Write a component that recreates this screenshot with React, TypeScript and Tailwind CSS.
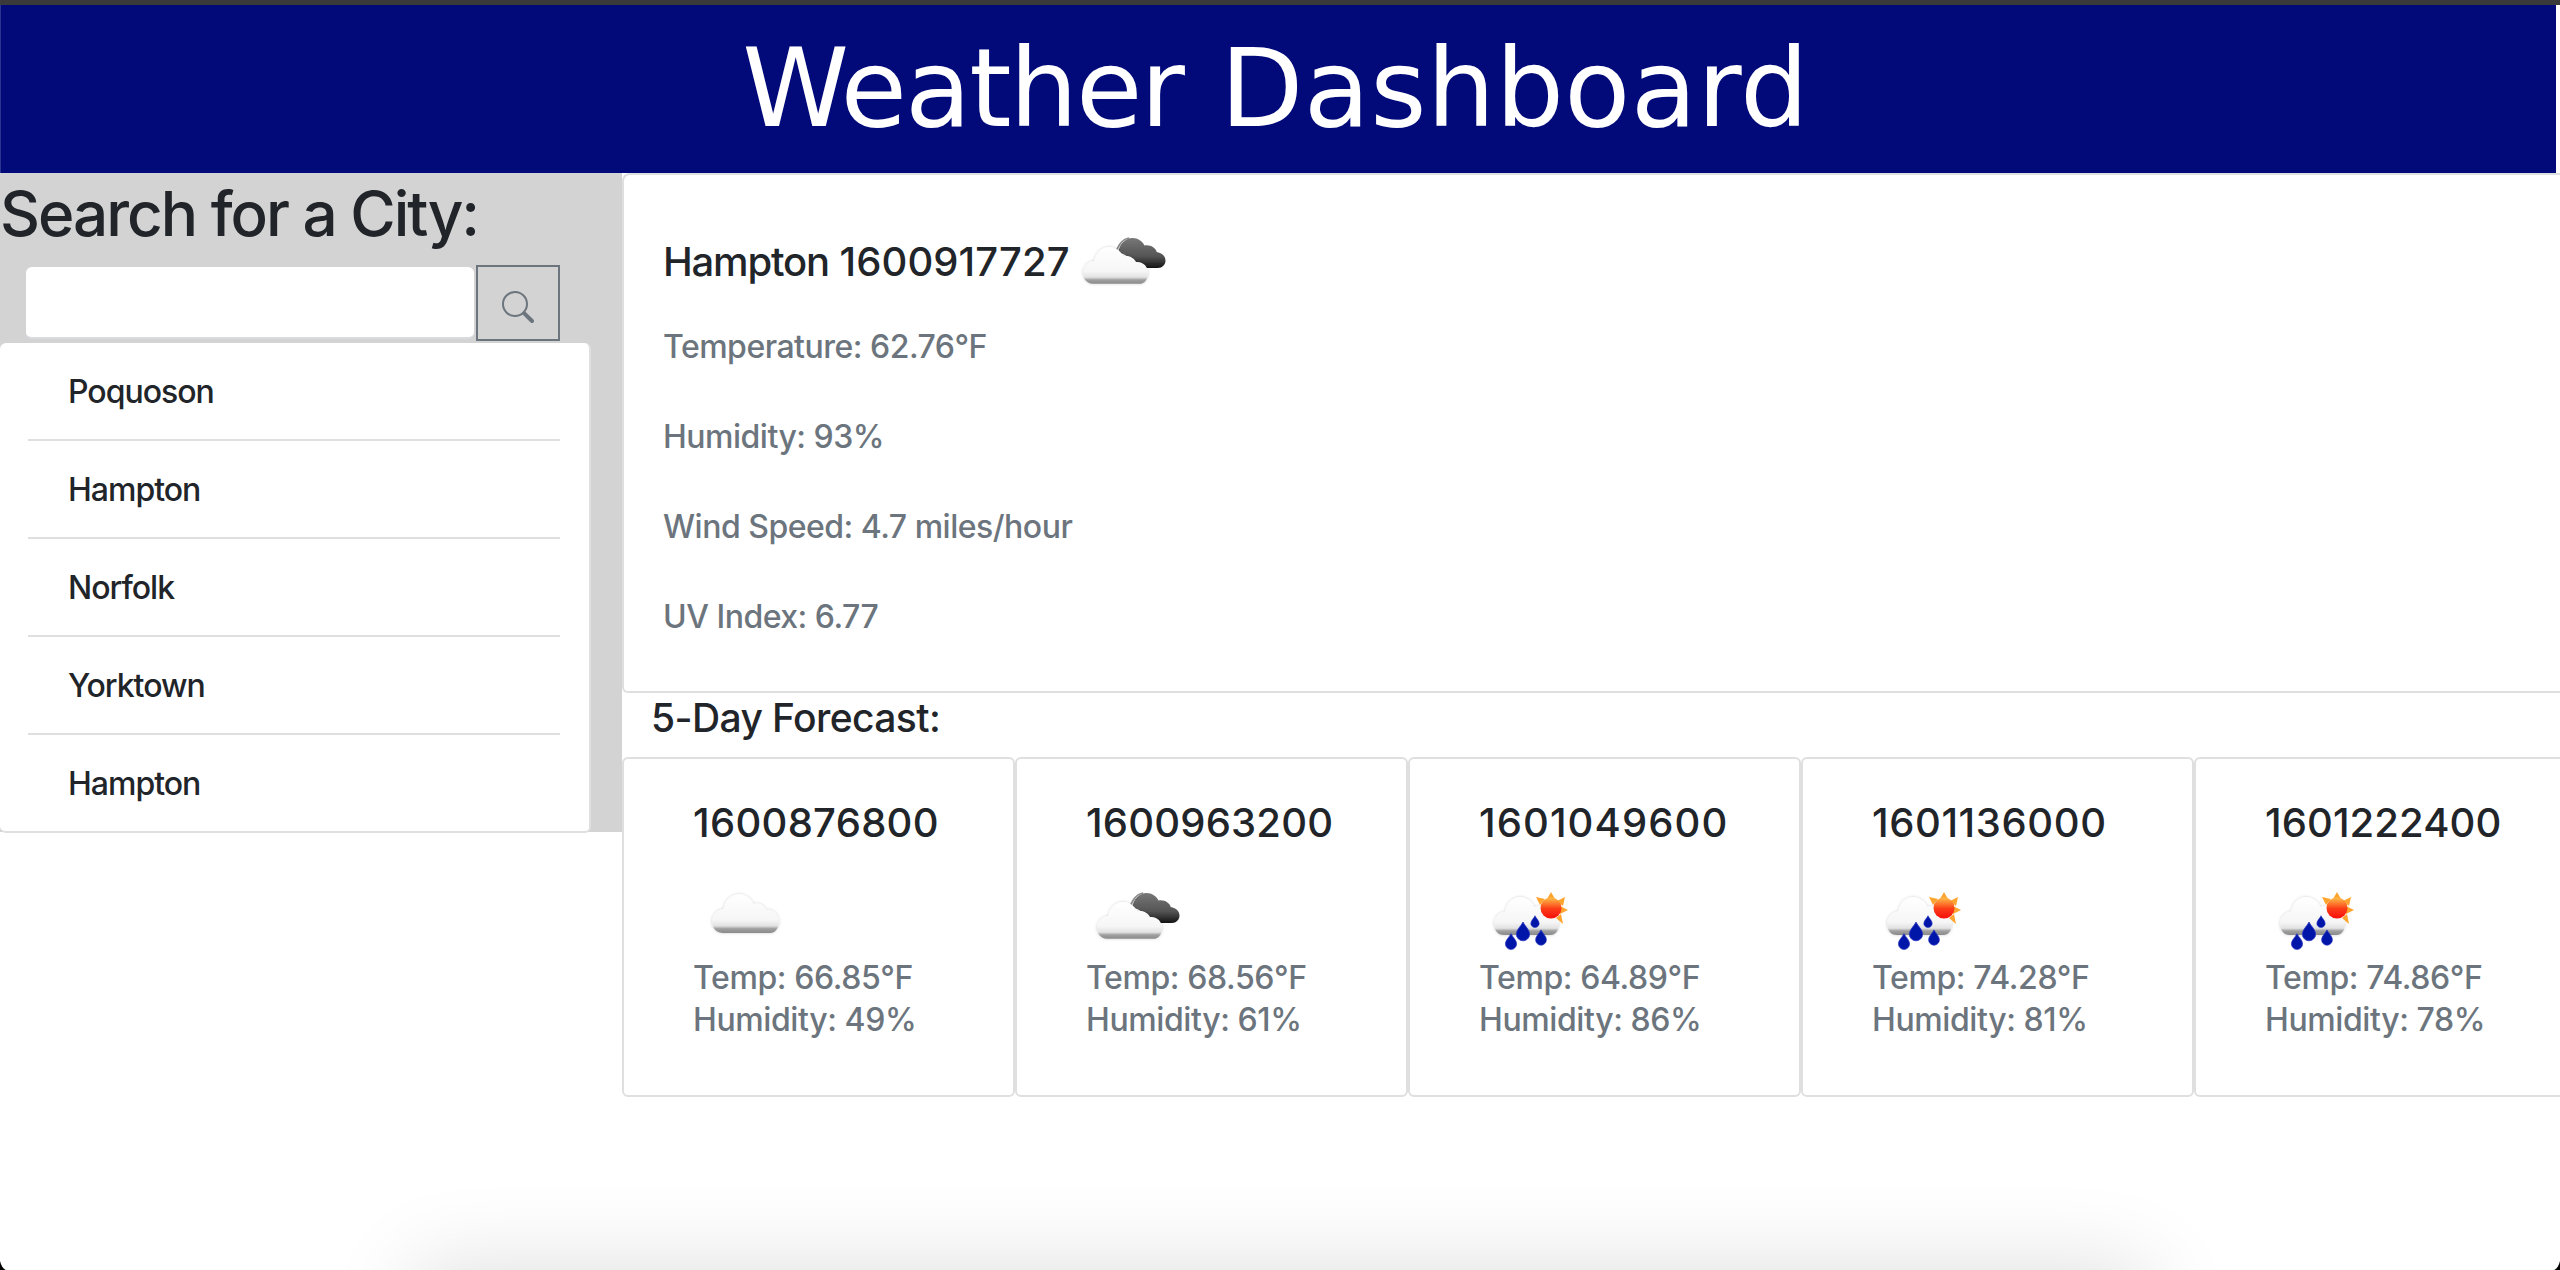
const cities = ["Poquoson", "Hampton", "Norfolk", "Yorktown", "Hampton"];

type IconKind = "cloud" | "broken" | "rain";

const forecast: { date: string; spacing: string; icon: IconKind; temp: string; humidity: string }[] = [
  { date: "1600876800", spacing: "tracking-[0.3px]", icon: "cloud", temp: "66.85", humidity: "49" },
  { date: "1600963200", spacing: "tracking-[0.2px]", icon: "broken", temp: "68.56", humidity: "61" },
  { date: "1601049600", spacing: "tracking-[1.1px]", icon: "rain", temp: "64.89", humidity: "86" },
  { date: "1601136000", spacing: "tracking-[0.6px]", icon: "rain", temp: "74.28", humidity: "81" },
  { date: "1601222400", spacing: "tracking-[0.1px]", icon: "rain", temp: "74.86", humidity: "78" },
];

const cloudPath =
  "M8 62c-5-8 0-19 11-20 2-11 12-17 21-15 6 1 11 5 13 10 6-2 12 1 15 6 8-1 14 5 14 12 0 7-4 12-10 12H18c-5 0-8-2-10-5z";

function Gradients() {
  return (
    <svg width="0" height="0" className="absolute">
      <defs>
        <linearGradient id="cloudFill" x1="0" y1="0" x2="0" y2="1">
          <stop offset="0" stopColor="#ffffff" />
          <stop offset="0.66" stopColor="#f6f6f6" />
          <stop offset="0.82" stopColor="#e2e2e2" />
          <stop offset="0.89" stopColor="#a0a0a0" />
          <stop offset="1" stopColor="#8a8a8a" />
        </linearGradient>
        <linearGradient id="darkFill" x1="0" y1="0" x2="0" y2="1">
          <stop offset="0" stopColor="#777777" />
          <stop offset="0.6" stopColor="#555555" />
          <stop offset="1" stopColor="#141414" />
        </linearGradient>
        <linearGradient id="sunFill" x1="0" y1="0" x2="0" y2="1">
          <stop offset="0" stopColor="#ffc04a" />
          <stop offset="0.55" stopColor="#fb3a14" />
          <stop offset="1" stopColor="#f80f0f" />
        </linearGradient>
        <filter id="soft" x="-20%" y="-20%" width="140%" height="140%">
          <feGaussianBlur stdDeviation="0.7" />
        </filter>
        <filter id="cloudHalo" x="-20%" y="-20%" width="140%" height="140%">
          <feDropShadow dx="0" dy="0" stdDeviation="1.6" floodColor="#000000" floodOpacity="0.2" />
          <feGaussianBlur stdDeviation="0.5" />
        </filter>
      </defs>
    </svg>
  );
}

function Drop({ x, y, s }: { x: number; y: number; s: number }) {
  return (
    <path
      transform={`translate(${x} ${y}) scale(${s})`}
      d="M0-9C2-5 6-2 6 2a6 6 0 0 1-12 0C-6-2-2-5 0-9z"
      fill="#0613a8"
      stroke="#2a3bc4"
      strokeWidth="0.8"
    />
  );
}

function WeatherIcon({ kind }: { kind: IconKind }) {
  if (kind === "cloud") {
    return (
      <svg viewBox="0 0 100 100" className="h-[100px] w-[100px] shrink-0 overflow-visible">
        <g filter="url(#cloudHalo)" transform="translate(14.7 6.6) scale(0.88 0.96)">
          <path d={cloudPath} fill="url(#cloudFill)" />
        </g>
      </svg>
    );
  }
  if (kind === "broken") {
    return (
      <svg viewBox="0 0 100 100" className="h-[100px] w-[100px] shrink-0 overflow-visible">
        <g filter="url(#soft)" transform="translate(-10 12.8) scale(1.1 1.07)">
          <path
            d="M52 31c1-9 7-14 13-14 5 0 9 3 11 7 5-1 10 2 11 6 5 1 8 4 8 8s-3 7-7 7H70c-5-1-8-5-9-10-3-3-6-4-9-4z"
            fill="url(#darkFill)"
          />
          <path d="M50 32c1-8 6-14 12-15" fill="none" stroke="#8a8a8a" strokeWidth="1.6" />
        </g>
        <g filter="url(#cloudHalo)" transform="translate(6.9 15.9) scale(0.855 0.91)">
          <path d={cloudPath} fill="url(#cloudFill)" />
        </g>
      </svg>
    );
  }
  return (
    <svg viewBox="0 0 100 100" className="h-[100px] w-[100px] shrink-0 overflow-visible">
      <g filter="url(#cloudHalo)" transform="translate(10.9 10.1) scale(0.855 0.94)">
        <path d={cloudPath} fill="url(#cloudFill)" />
      </g>
      <g filter="url(#soft)">
        <g fill="#ffa42e">
          <path d="M73 30l4 7h-8z" />
          <path d="M58 35l9 2-5 6z" />
          <path d="M87 35l-2 9-6-5z" />
          <path d="M90 48l-8 4v-8z" />
          <path d="M85 62l-7-6 5-4z" />
        </g>
        <circle cx="73" cy="46" r="10.5" fill="url(#sunFill)" />
      </g>
      <g filter="url(#soft)">
        <Drop x={45} y={70} s={1.1} />
        <Drop x={57} y={60} s={0.7} />
        <Drop x={63} y={76} s={0.9} />
        <Drop x={33} y={80} s={0.93} />
      </g>
    </svg>
  );
}

function ForecastCard({ date, spacing, icon, temp, humidity }: (typeof forecast)[number]) {
  return (
    <div className="h-[340px] w-[393px] shrink-0 rounded-[6px] border-2 border-[#dfdfdf] pt-[40px] pl-[69px]">
      <h5 className={`text-[40px] leading-[48px] font-medium text-[#212529] ${spacing}`}>{date}</h5>
      <div className="mt-[15px] -ml-[1px] h-[100px]">
        <WeatherIcon kind={icon} />
      </div>
      <p className="-mt-[5px] text-[32px] leading-[42px] font-[450] tracking-[-0.4px] text-[#6c757d]">Temp: {temp}°F</p>
      <p className="text-[32px] leading-[42px] font-[450] tracking-[-0.4px] text-[#6c757d]">Humidity: {humidity}%</p>
    </div>
  );
}

export default function App() {
  return (
    <div className="relative h-[1270px] overflow-hidden bg-white font-['Inter','Noto_Sans',sans-serif]">
      <Gradients />
      <div className="h-[5px] bg-[#3a3a3b]" />
      <header className="mr-[4px] flex h-[168px] items-center justify-center border-l border-[#2c3391] bg-[#020a7a] pr-[6px]">
        <h1 className="font-['DejaVu_Sans',sans-serif] text-[108px] leading-none [word-spacing:3px] text-white">
          <span className="tracking-[-2px]">Weather</span> <span className="tracking-[0.3px]">Dashboard</span>
        </h1>
      </header>

      <div className="flex">
        <aside className="h-[659px] w-[622px] shrink-0 bg-[#d3d3d3]">
          <h2 className="mb-[13px] pt-[2px] text-[62px] leading-[77px] font-[550] tracking-[-2px] whitespace-nowrap text-[#212529]">Search for a City:</h2>
          <div className="flex pl-[26px]">
            <div className="mt-[2px] h-[72px] w-[448px] rounded-[6px] border-b-2 border-[#d8dbe0] bg-white" />
            <button className="ml-[2px] flex h-[76px] w-[84px] items-center justify-center border-2 border-[#6c757d] pt-[8px]">
              <svg viewBox="0 0 16 16" className="h-[32px] w-[32px]" fill="#6c757d">
                <path d="M10.442 10.442a1 1 0 0 1 1.415 0l3.85 3.85a1 1 0 0 1-1.414 1.415l-3.85-3.85a1 1 0 0 1 0-1.415z" />
                <path d="M6.5 12a5.5 5.5 0 1 0 0-11 5.5 5.5 0 0 0 0 11zM13 6.5a6.5 6.5 0 1 1-13 0 6.5 6.5 0 0 1 13 0z" />
              </svg>
            </button>
          </div>
          <ul className="mt-[2px] w-[591px] rounded-[6px] border-r-2 border-b-2 border-[#dfdfdf] bg-white pr-[29px]">
            {cities.map((city, i) => (
              <li key={i} className="ml-[28px] h-[98px] border-b-2 border-[#dfdfdf] pt-[30px] pl-[40px] text-[32px] leading-[38px] font-[450] tracking-[-1px] text-[#212529] last:h-[96px] last:border-b-0">
                {city}
              </li>
            ))}
          </ul>
        </aside>

        <main className="min-w-0 flex-1">
          <section className="h-[520px] rounded-tl-[8px] rounded-bl-[6px] border-t-2 border-b-2 border-l-2 border-[#dfdfdf] pt-[61px] pl-[39px]">
            <div className="flex h-[52px] items-center">
              <h5 className="text-[40px] leading-[48px] font-medium whitespace-nowrap text-[#212529]">
                <span className="tracking-[-1.2px]">Hampton</span> <span className="tracking-[0.1px]">1600917727</span>
              </h5>
              <div className="-mt-[34px] -mb-[24px] ml-[1px]">
                <WeatherIcon kind="broken" />
              </div>
            </div>
            <p className="mt-[35px] text-[32px] leading-[48px] font-[450] tracking-[-0.5px] text-[#6c757d]">Temperature: 62.76°F</p>
            <p className="mt-[42px] text-[32px] leading-[48px] font-[450] tracking-[-0.5px] text-[#6c757d]">Humidity: 93%</p>
            <p className="mt-[42px] text-[32px] leading-[48px] font-[450] tracking-[-0.5px] text-[#6c757d]">Wind Speed: 4.7 miles/hour</p>
            <p className="mt-[42px] text-[32px] leading-[48px] font-[450] tracking-[-0.5px] text-[#6c757d]">UV Index: 6.77</p>
          </section>
          <h4 className="h-[64px] pt-[1px] pl-[29px] text-[39px] leading-[48px] font-medium tracking-[-0.6px] text-[#212529]">5-Day Forecast:</h4>
          <div className="flex">
            {forecast.map((day) => (
              <ForecastCard key={day.date} {...day} />
            ))}
          </div>
        </main>
      </div>

      <div className="absolute top-[1270px] right-[413px] left-[415px] h-[100px] shadow-[0_0_90px_rgba(0,0,0,0.14)]" />
      <svg viewBox="0 0 6 9" className="absolute bottom-0 left-0 h-[9px] w-[6px]">
        <path d="M0 0v9h6C3 8 1 4 0 0z" fill="#000000" />
      </svg>
      <svg viewBox="0 0 6 9" className="absolute right-0 bottom-0 h-[9px] w-[6px]">
        <path d="M6 0v9H0c3-1 5-5 6-9z" fill="#000000" />
      </svg>
    </div>
  );
}
